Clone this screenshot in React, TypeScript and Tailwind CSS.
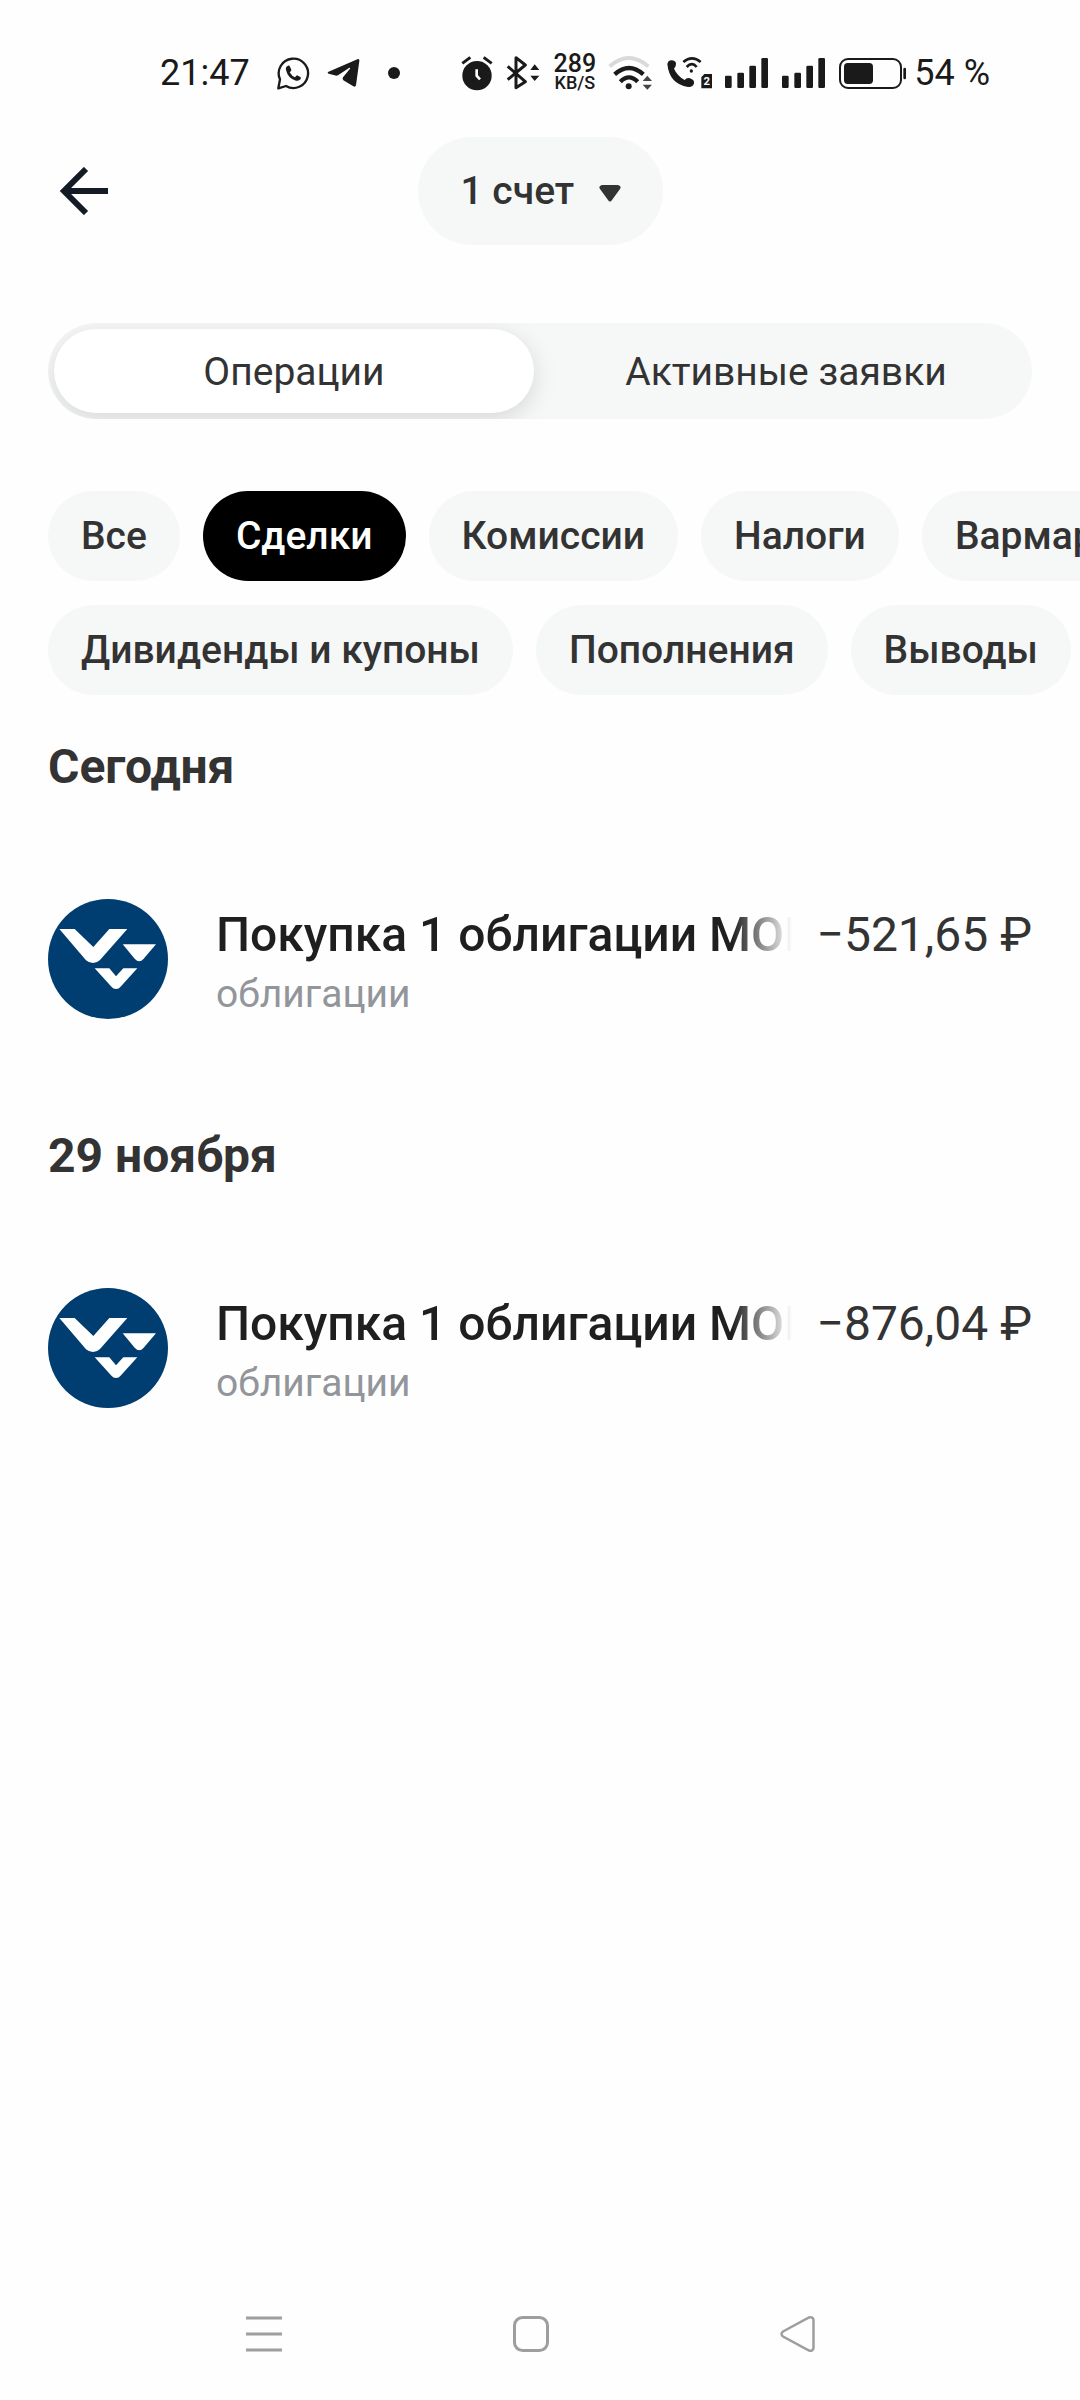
import React, { useState } from 'react';

const filterRows = [
  ['Все', 'Сделки', 'Комиссии', 'Налоги', 'Вармаржа'],
  ['Дивиденды и купоны', 'Пополнения', 'Выводы'],
];

const tabs = ['Операции', 'Активные заявки'];

interface Operation {
  title: string;
  kind: string;
  amount: string;
}

const days: { date: string; operations: Operation[] }[] = [
  {
    date: 'Сегодня',
    operations: [{ title: 'Покупка 1 облигации МОН', kind: 'облигации', amount: '−521,65 ₽' }],
  },
  {
    date: '29 ноября',
    operations: [{ title: 'Покупка 1 облигации МОН', kind: 'облигации', amount: '−876,04 ₽' }],
  },
];

const SignalIcon = () => (
  <svg className="w-[43px] h-[30px]" viewBox="0 0 129 90" fill="currentColor">
    <rect x="0" y="53" width="20" height="37" rx="4" />
    <rect x="37" y="44" width="20" height="46" rx="4" />
    <rect x="73" y="23" width="20" height="67" rx="4" />
    <rect x="109" y="0" width="20" height="90" rx="4" />
  </svg>
);

const StatusBar = () => (
  <div className="flex items-center justify-between pt-[52px] pb-[43px] pl-40 pr-[90px] h-[137px] text-[#1a1a1a]">
    <div className="flex items-center gap-[26px]">
      <span className="text-[36px] leading-[42px]">21:47</span>
      <div className="flex items-center gap-4">
        {/* WhatsApp */}
        <svg className="w-[34px] h-[34px]" viewBox="0 0 102 102" fill="none">
          <path d="M7 97L12 70A44 44 0 1 1 30 90Z" stroke="currentColor" strokeWidth="7" strokeLinejoin="round" />
          <path
            d="M30 42Q28 32 36 29Q40 28 42 32L46 41Q47 44 41 49Q48 61 57 64L61 59Q63 57 66 59L73 63Q76 65 74 69Q69 76 60 74Q36 68 30 42Z"
            fill="currentColor"
          />
        </svg>
        {/* Telegram */}
        <svg className="w-9 h-[30px]" viewBox="0 0 108 90" fill="currentColor">
          <path d="M6 42L94 4Q101 1 100 9L90 82Q88 88 82 85L52 67Q48 63 51 58L72 32Q74 28 69 30L36 52Q31 54 26 52L8 47Q3 45 6 42Z" />
        </svg>
      </div>
      <span className="size-3 rounded-full bg-[#1a1a1a]" />
    </div>

    <div className="flex items-center gap-2">
      <div className="flex items-center gap-3">
        {/* alarm */}
        <svg className="w-[34px] h-9" viewBox="0 0 102 108" fill="none">
          <circle cx="51" cy="62" r="44" fill="currentColor" />
          <path d="M7 25L31 7M71 7L95 25" stroke="currentColor" strokeWidth="9" />
          <path d="M50 43V62L60 73" stroke="#fefefe" strokeWidth="8" />
        </svg>
        {/* bluetooth */}
        <svg className="w-9 h-9" viewBox="0 0 108 108" fill="none">
          <path d="M5 34L58 80L30 98V8L58 30L5 74" stroke="currentColor" strokeWidth="9" strokeLinejoin="round" />
          <path d="M73 45L86 28L100 45ZM73 62H100L86 78Z" fill="currentColor" />
        </svg>
        <div className="flex flex-col items-center font-medium">
          <span className="text-[25px] leading-[20px]">289</span>
          <span className="text-[18px] leading-[18px]">KB/S</span>
        </div>
        {/* wifi */}
        <svg className="w-[46px] h-9" viewBox="0 0 138 108" fill="none">
          <path d="M5 34Q62 -16 121 34" stroke="#d9d9d9" strokeWidth="11" />
          <path d="M20 58Q63 20 106 58M37 80Q63 54 89 80" stroke="currentColor" strokeWidth="13" />
          <circle cx="62" cy="94" r="9" fill="currentColor" />
          <path d="M104 78L118 62L132 78ZM104 89H132L118 104Z" fill="#444444" />
        </svg>
        {/* wifi calling, second sim */}
        <svg className="w-[47px] h-[34px]" viewBox="0 0 141 102" fill="none">
          <path
            d="M4 24Q6 14 16 13Q28 13 30 22Q31 32 24 38Q34 60 56 72Q62 64 72 67Q86 72 84 82Q82 94 66 93Q10 84 4 24Z"
            fill="currentColor"
          />
          <path d="M52 18Q78 -4 104 18M62 33Q78 16 92 33" stroke="currentColor" strokeWidth="8" />
          <circle cx="76" cy="45" r="5" fill="currentColor" />
          <path d="M115 54H138V97H106V64Z" fill="currentColor" />
          <text x="122" y="88" textAnchor="middle" className="text-[34px] font-bold" fill="#fefefe">2</text>
        </svg>
        <div className="flex items-center gap-[14px]">
          <SignalIcon />
          <SignalIcon />
          {/* battery */}
          <svg className="w-[67px] h-[31px]" viewBox="0 0 201 93" fill="none">
            <rect x="3" y="3" width="183" height="87" rx="24" stroke="currentColor" strokeWidth="6" />
            <rect x="15" y="15" width="87" height="63" rx="11" fill="currentColor" />
            <rect x="193" y="29" width="8" height="35" rx="4" fill="currentColor" />
          </svg>
        </div>
      </div>
      <span className="text-[36px] leading-[42px]">54 %</span>
    </div>
  </div>
);

const IssuerLogo = () => (
  <svg className="w-[120px] h-[120px] shrink-0" viewBox="0 0 360 360">
    <circle cx="180" cy="180" r="180" fill="#003d70" />
    <g fill="#ffffff">
      <path d="M34 90H80L136 144L184 90H238L156 183Q147 192 135 192Q123 192 114 184Z" />
      <path d="M224 136H324L287 179Q274 194 260 179Z" />
      <path d="M140 208H184L204 232L226 208H268L217 264Q213 270 204 270Q196 270 191 264Z" />
    </g>
  </svg>
);

const OperationRow: React.FC<{ operation: Operation }> = ({ operation }) => (
  <li className="flex gap-12">
    <IssuerLogo />
    <div className="flex-1 min-w-0 pt-2">
      <div className="flex gap-6 text-[48px] leading-[56px]">
        <span className="flex-1 min-w-0 overflow-hidden whitespace-nowrap font-medium text-[#1f1f1f] [mask-image:linear-gradient(to_right,black_calc(100%-60px),transparent)]">
          {operation.title}
        </span>
        <span className="whitespace-nowrap">{operation.amount}</span>
      </div>
      <p className="mt-[7px] text-[39px] leading-[48px] text-[#92959a]">{operation.kind}</p>
    </div>
  </li>
);

const App: React.FC = () => {
  const [tab, setTab] = useState('Операции');
  const [filter, setFilter] = useState('Сделки');

  return (
    <div className="min-h-screen flex flex-col overflow-hidden bg-[#fefefe] text-[#333333] font-[Roboto,sans-serif]">
      <StatusBar />

      <header className="grid grid-cols-[1fr_auto_1fr] items-center px-12">
        <button aria-label="Назад" className="justify-self-start pl-3 text-[#151b26]">
          <svg className="size-12" viewBox="0 0 48 48" fill="none" stroke="currentColor" strokeWidth="6">
            <path d="M48 24H5M26 2L4 24L26 46" />
          </svg>
        </button>
        <div className="relative">
          <select
            aria-label="Счет"
            className="appearance-none h-[108px] pl-[43px] pr-[88px] rounded-full bg-[#f6f8f8] text-[39px] font-medium"
          >
            <option>1 счет</option>
          </select>
          <svg
            className="absolute right-[42px] top-12 w-[22px] h-[17px] pointer-events-none"
            viewBox="0 0 22 17"
            fill="currentColor"
          >
            <path d="M3 0H19Q23 1 21 4L13 15Q11 18 9 15L1 4Q-1 1 3 0Z" />
          </svg>
        </div>
      </header>

      <div className="flex mx-12 mt-[78px] rounded-full overflow-hidden bg-[#f6f8f8]">
        {tabs.map((name) => (
          <button
            key={name}
            onClick={() => setTab(name)}
            className={`flex-1 basis-0 m-1.5 h-[84px] pt-0.5 rounded-full text-[39px] ${
              tab === name ? 'bg-white shadow-[0_6px_24px_rgba(0,0,0,0.13)]' : ''
            }`}
          >
            {name}
          </button>
        ))}
      </div>

      <div className="flex flex-col gap-6 mt-[72px] pl-12">
        {filterRows.map((row) => (
          <div key={row[0]} className="flex gap-[23px]">
            {row.map((name) => (
              <button
                key={name}
                onClick={() => setFilter(name)}
                className={`shrink-0 h-[90px] px-[33px] rounded-full text-[39px] font-medium ${
                  filter === name ? 'bg-black text-white' : 'bg-[#f6f8f8]'
                }`}
              >
                {name}
              </button>
            ))}
          </div>
        ))}
      </div>

      <main className="px-12 pt-[43px]">
        {days.map((day) => (
          <section key={day.date} className="pb-[108px]">
            <h2 className="mb-[104px] text-[48px] leading-[57px] font-bold">{day.date}</h2>
            <ul>
              {day.operations.map((operation) => (
                <OperationRow key={operation.amount} operation={operation} />
              ))}
            </ul>
          </section>
        ))}
      </main>

      <nav className="grid grid-cols-3 justify-items-center mt-auto pl-[130px] pr-[148px] pb-12 text-[#9e9e9e]">
        <button aria-label="Меню">
          <svg className="size-9" viewBox="0 0 36 36" fill="none" stroke="currentColor" strokeWidth="3">
            <path d="M0 2H36M0 18H36M0 34H36" />
          </svg>
        </button>
        <button aria-label="Домой">
          <svg className="size-9" viewBox="0 0 36 36" fill="none" stroke="currentColor" strokeWidth="3">
            <rect x="1.5" y="1.5" width="33" height="33" rx="8" />
          </svg>
        </button>
        <button aria-label="Обратно">
          <svg className="size-9" viewBox="0 0 36 36" fill="none" stroke="currentColor" strokeWidth="2.5">
            <path d="M3 15.5L29 1.5Q33 0.5 33.500 4V32Q33 35.500 29 34.500L3 20.500Q0 18 3 15.500Z" />
          </svg>
        </button>
      </nav>
    </div>
  );
};

export default App;
